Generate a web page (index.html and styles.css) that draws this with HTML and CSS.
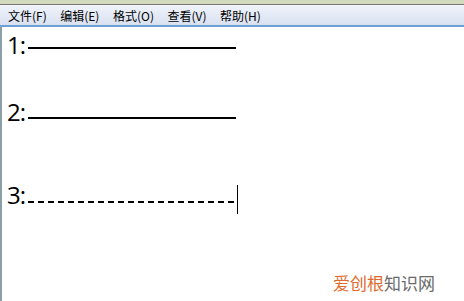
FILE: index.html
```html
<!DOCTYPE html>
<html>
<head>
<meta charset="utf-8">
<link rel="stylesheet" href="styles.css">
</head>
<body>
<div class="window">
  <div class="topstrip"></div>
  <div class="menubar">
    <span class="menu">文件(F)</span>
    <span class="menu">编辑(E)</span>
    <span class="menu">格式(O)</span>
    <span class="menu">查看(V)</span>
    <span class="menu">帮助(H)</span>
  </div>
  <div class="editor">
    <div class="row row1"><span class="num">1:</span><span class="rule solid"></span></div>
    <div class="row row2"><span class="num">2:</span><span class="rule under"></span></div>
    <div class="row row3"><span class="num">3:</span><span class="rule dashed"></span><span class="caret"></span></div>
    <div class="watermark"><span class="wm-a">爱创根</span><span class="wm-b">知识网</span></div>
  </div>
</div>
</body>
</html>
```
FILE: styles.css
```css
html, body {
  margin: 0;
  padding: 0;
  width: 464px;
  height: 301px;
  overflow: hidden;
  background: #ffffff;
}
.window {
  width: 464px;
  height: 301px;
  display: flex;
  flex-direction: column;
}
.topstrip {
  height: 4px;
  background: #d3dbbf;
  border-bottom: 1px solid #77776a;
}
.menubar {
  height: 19px;
  background: linear-gradient(#eef2fa, #d9e1f1);
  border-top: 1px solid #f3f5fa;
  border-bottom: 2px solid #6e9fd6;
  display: flex;
  align-items: center;
  padding-left: 8px;
  gap: 13.5px;
  font-family: "Noto Sans CJK SC", sans-serif;
  font-size: 12px;
  color: #000;
}
.menu {
  line-height: 16px;
  padding-top: 1px;
}
.editor {
  flex: 1;
  position: relative;
  border-left: 2px solid #8c9ea6;
  font-family: "Open Sans", "DejaVu Sans", sans-serif;
  font-size: 24px;
  color: #000;
}
.row {
  display: flex;
  align-items: flex-end;
  height: 30px;
  padding-left: 5px;
}
.row1 { margin-top: 3px; }
.row2 { margin-top: 37px; }
.row3 { margin-top: 53px; }
.num {
  line-height: 30px;
  width: 21px;
  letter-spacing: -1px;
}
.rule {
  display: block;
  width: 208px;
}
.solid {
  height: 2px;
  background: #000;
  margin-bottom: 11px;
}
.under {
  height: 2px;
  background: #000;
  margin-bottom: 8px;
}
.dashed {
  height: 2px;
  margin-bottom: 7px;
  background: repeating-linear-gradient(90deg, #000 0 6px, transparent 6px 10px);
}
.caret {
  display: block;
  width: 1px;
  height: 29px;
  background: #000;
  margin-left: 1px;
  margin-bottom: -4px;
}
.watermark {
  position: absolute;
  left: 331px;
  top: 246px;
  font-family: "Noto Sans CJK SC", sans-serif;
  font-size: 17px;
  line-height: 20px;
}
.wm-a { color: #e06a2c; }
.wm-b { color: #6a6a6a; }
```
